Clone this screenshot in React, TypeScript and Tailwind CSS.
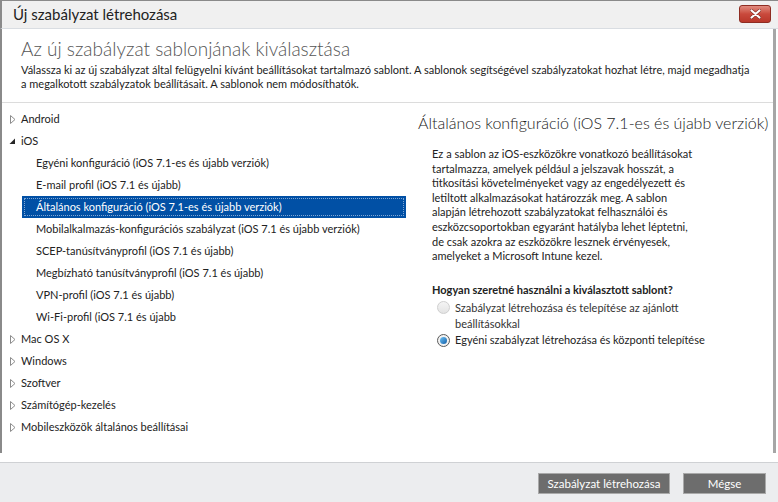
import React from "react";

const font = { fontFamily: 'Lato, "Segoe UI", "Noto Sans", sans-serif' };

function Collapsed() {
  return (
    <svg width="6" height="9" viewBox="0 0 6 9" className="shrink-0">
      <path d="M0.5 0.5 L5 4.5 L0.5 8.5 Z" fill="#fff" stroke="#8c8c8c" strokeWidth="1" />
    </svg>
  );
}

function Expanded() {
  return (
    <svg width="7" height="7" viewBox="0 0 7 7" className="shrink-0">
      <path d="M6 0.5 L6 6 L0.5 6 Z" fill="#262626" />
    </svg>
  );
}

type Node = { label: string; level: 0 | 1; open?: boolean; selected?: boolean };

const tree: Node[] = [
  { label: "Android", level: 0 },
  { label: "iOS", level: 0, open: true },
  { label: "Egyéni konfiguráció (iOS 7.1-es és újabb verziók)", level: 1 },
  { label: "E-mail profil (iOS 7.1 és újabb)", level: 1 },
  { label: "Általános konfiguráció (iOS 7.1-es és újabb verziók)", level: 1, selected: true },
  { label: "Mobilalkalmazás-konfigurációs szabályzat (iOS 7.1 és újabb verziók)", level: 1 },
  { label: "SCEP-tanúsítványprofil (iOS 7.1 és újabb)", level: 1 },
  { label: "Megbízható tanúsítványprofil (iOS 7.1 és újabb)", level: 1 },
  { label: "VPN-profil (iOS 7.1 és újabb)", level: 1 },
  { label: "Wi-Fi-profil (iOS 7.1 és újabb", level: 1 },
  { label: "Mac OS X", level: 0 },
  { label: "Windows", level: 0 },
  { label: "Szoftver", level: 0 },
  { label: "Számítógép-kezelés", level: 0 },
  { label: "Mobileszközök általános beállításai", level: 0 },
];

const desc = [
  "Ez a sablon az iOS-eszközökre vonatkozó beállításokat",
  "tartalmazza, amelyek például a jelszavak hosszát, a",
  "titkosítási követelményeket vagy az engedélyezett és",
  "letiltott alkalmazásokat határozzák meg. A sablon",
  "alapján létrehozott szabályzatokat felhasználói és",
  "eszközcsoportokban egyaránt hatályba lehet léptetni,",
  "de csak azokra az eszközökre lesznek érvényesek,",
  "amelyeket a Microsoft Intune kezel.",
];

export default function App() {
  return (
    <div style={font} className="w-[778px] h-[502px] bg-white flex flex-col text-[#222] overflow-hidden whitespace-nowrap">
      {/* Title bar */}
      <div className="h-[29px] shrink-0 bg-[#f0f0f0] border-t border-l-2 border-[#8a8a8a] border-b border-b-[#d9dde2] flex items-center justify-between pl-[11px] pr-[7px]">
        <span className="text-[15px] leading-none">Új szabályzat létrehozása</span>
        <div className="w-[32px] h-[18px] rounded-[3px] border border-[#8e2c22] bg-gradient-to-b from-[#e08a7e] via-[#c9493c] to-[#b9372a] flex items-center justify-center mb-[2px]">
          <svg width="11" height="10" viewBox="0 0 11 10">
            <path d="M1.5 1.5 L9.5 8.5 M9.5 1.5 L1.5 8.5" stroke="#7a2a22" strokeWidth="3.2" strokeLinecap="round" />
            <path d="M1.5 1.5 L9.5 8.5 M9.5 1.5 L1.5 8.5" stroke="#fff" strokeWidth="2.2" strokeLinecap="round" />
          </svg>
        </div>
      </div>

      {/* Body */}
      <div className="h-[424px] shrink-0 flex flex-col border-l-2 border-[#8a8a8a] border-r-[3px] border-r-[#a6a6a6] mr-[2px]">
        <div className="pl-[19px] pt-[7px] pb-[11px] border-b border-[#dcdcdc]">
          <h1 className="text-[19px] leading-[26px] font-light text-[#555]">Az új szabályzat sablonjának kiválasztása</h1>
          <p className="text-[11px] leading-[14px] mt-[1px]">
            Válassza ki az új szabályzat által felügyelni kívánt beállításokat tartalmazó sablont. A sablonok segítségével szabályzatokat hozhat létre, majd megadhatja
            <br />a megalkotott szabályzatok beállításait. A sablonok nem módosíthatók.
          </p>
        </div>

        <div className="flex flex-1">
          {/* Tree */}
          <div className="w-[404px] shrink-0 pt-[5px] text-[11px]">
            {tree.map((n) =>
              n.level === 0 ? (
                <div key={n.label} className="h-[22px] flex items-center">
                  <div className="w-[19px] flex justify-end pr-[5px]">{n.open ? <Expanded /> : <Collapsed />}</div>
                  <span>{n.label}</span>
                </div>
              ) : (
                <div key={n.label} className="h-[22px] flex items-center pl-[20px]">
                  <div
                    className={
                      n.selected
                        ? "h-[22px] w-full flex items-center bg-[#0150a5] text-white p-[2px]"
                        : "h-[22px] w-full flex items-center p-[2px]"
                    }
                  >
                    <div
                      className={
                        n.selected
                          ? "h-full w-full flex items-center pl-[11px] border border-dotted border-[#7fa6d4]"
                          : "h-full w-full flex items-center pl-[12px]"
                      }
                    >
                      {n.label}
                    </div>
                  </div>
                </div>
              )
            )}
          </div>

          {/* Detail */}
          <div className="flex-1 min-w-0 pl-[12px] pt-[9px]">
            <h2 className="text-[16px] leading-[22px] font-light text-[#222]">Általános konfiguráció (iOS 7.1-es és újabb verziók)</h2>
            <div className="pl-[14px] mt-[13px] text-[11px] leading-[14.6px]">
              {desc.map((l) => (
                <div key={l}>{l}</div>
              ))}
              <div className="font-bold mt-[19px]">Hogyan szeretné használni a kiválasztott sablont?</div>
              <div className="flex items-start gap-[5px] mt-[3px] pl-[5px] text-[#333]">
                <div className="w-[13px] h-[13px] mt-[1px] rounded-full border border-[#cfcfcf] bg-gradient-to-b from-[#f4f4f4] to-[#e4e4e4] shrink-0" />
                <div className="leading-[16px]">
                  Szabályzat létrehozása és telepítése az ajánlott
                  <br />
                  beállításokkal
                </div>
              </div>
              <div className="flex items-center gap-[5px] mt-[0px] pl-[5px]">
                <div className="w-[13px] h-[13px] rounded-full border border-[#5a5a5a] bg-[#f2f2f2] flex items-center justify-center shrink-0">
                  <div className="w-[7px] h-[7px] rounded-full bg-gradient-to-br from-[#6fc3f5] to-[#0d5fa8]" />
                </div>
                <span className="leading-[16px]">Egyéni szabályzat létrehozása és központi telepítése</span>
              </div>
            </div>
          </div>
        </div>
      </div>

      <div className="h-[9px] shrink-0" />

      {/* Footer */}
      <div className="flex-1 bg-[#ecedef] border-t border-[#cfd1d4] flex items-start justify-end gap-[13px] pt-[10px] pr-[12px]">
        <button className="h-[21px] w-[132px] bg-[#6d6d6d] border border-[#a9a9a9] text-white text-[11.5px] leading-none">
          Szabályzat létrehozása
        </button>
        <button className="h-[21px] w-[83px] bg-[#6d6d6d] border border-[#a9a9a9] text-white text-[11.5px] leading-none">
          Mégse
        </button>
      </div>
    </div>
  );
}
